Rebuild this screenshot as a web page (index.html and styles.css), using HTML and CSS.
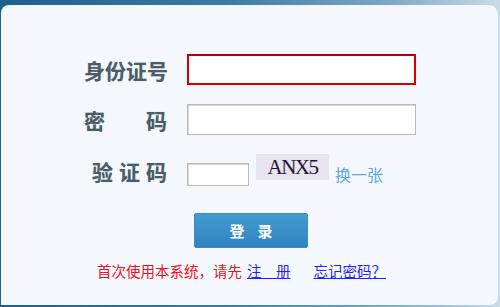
FILE: index.html
```html
<!DOCTYPE html>
<html lang="zh-CN">
<head>
<meta charset="utf-8">
<title>登录</title>
<link rel="stylesheet" href="styles.css">
</head>
<body>
<div class="panel">
  <div class="row">
    <label class="label">身份证号</label>
    <input class="field field-active" type="text">
  </div>
  <div class="row">
    <label class="label label-justify">密码</label>
    <input class="field" type="password">
  </div>
  <div class="row row-code">
    <label class="label label-code"><span>验证</span>码</label>
    <input class="field field-code" type="text">
    <div class="captcha">ANX5</div>
    <a class="refresh" href="#">换一张</a>
  </div>
  <button class="login" type="button">登录</button>
  <p class="hint">首次使用本系统，请先<a class="link link-reg" href="#">注　册</a><a class="link link-forgot" href="#">忘记密码？</a></p>
</div>
</body>
</html>
```
FILE: styles.css
```css
html, body {
  margin: 0;
  padding: 0;
  height: 100%;
}
body {
  background: linear-gradient(to right, #1f5f8a 0%, #3a7ba3 45%, #7fa8c4 78%, #c9dbe6 100%);
  font-family: "Noto Sans CJK SC", "Noto Sans", sans-serif;
  overflow: hidden;
}
.panel {
  box-sizing: border-box;
  margin: 5px 0 0 1px;
  width: 497px;
  height: 300px;
  background: #f4f8fd;
  border-radius: 8px 9px 8px 0;
  padding-top: 49px;
  display: flex;
  flex-direction: column;
}
.row {
  display: flex;
  align-items: center;
  margin-bottom: 19px;
}
.label {
  width: 83px;
  margin-left: 83px;
  margin-right: 20px;
  font-size: 21px;
  font-weight: bold;
  color: #4b5b67;
  line-height: 26px;
  text-align: right;
  white-space: nowrap;
  text-shadow: 0 0 1px rgba(75, 91, 103, 0.35);
}
.label-justify {
  text-align: justify;
  text-align-last: justify;
}
.label-code span {
  letter-spacing: 6px;
}
.label-code {
  letter-spacing: 0;
}
.field {
  box-sizing: border-box;
  width: 229px;
  height: 31px;
  margin: 0;
  padding: 0 4px;
  background: #fff;
  border: 1px solid #b9b9b9;
  box-shadow: inset 1px 1px 0 #d6d6d6;
  outline: none;
  font-size: 14px;
}
.field-active {
  border: 2px solid #d60000;
  border-top-color: #b80000;
  box-shadow: none;
}
.row-code {
  align-items: flex-start;
  margin-bottom: 0;
}
.row-code .label {
  margin-top: 4px;
}
.field-code {
  width: 62px;
  height: 23px;
  margin-top: 9px;
}
.captcha {
  box-sizing: border-box;
  width: 73px;
  height: 26px;
  margin-left: 7px;
  background: #e7e3ef;
  font-family: "Liberation Serif", "DejaVu Serif", serif;
  font-size: 21px;
  line-height: 26px;
  color: #24122f;
  text-align: center;
  letter-spacing: -1.5px;
}
.refresh {
  margin-left: 6px;
  margin-top: 10px;
  font-size: 16px;
  line-height: 20px;
  color: #5ea6da;
  text-decoration: none;
}
.login {
  box-sizing: border-box;
  width: 114px;
  height: 35px;
  margin: 27px 0 0 193px;
  padding: 0 0 0 13px;
  border: 1px solid #3b8cc2;
  border-radius: 2px;
  background: linear-gradient(to bottom, #449bd0, #2f84bf);
  color: #fff;
  font-family: "Noto Sans CJK SC", sans-serif;
  font-size: 15px;
  font-weight: bold;
  letter-spacing: 13px;
  cursor: pointer;
}
.hint {
  margin: 13px 0 0 96px;
  font-size: 14.5px;
  line-height: 20px;
  color: #e8131c;
  white-space: nowrap;
}
.link {
  color: #1f1fff;
  text-decoration: underline;
}
.link-reg {
  margin-left: 5px;
}
.link-forgot {
  margin-left: 23px;
}
```
